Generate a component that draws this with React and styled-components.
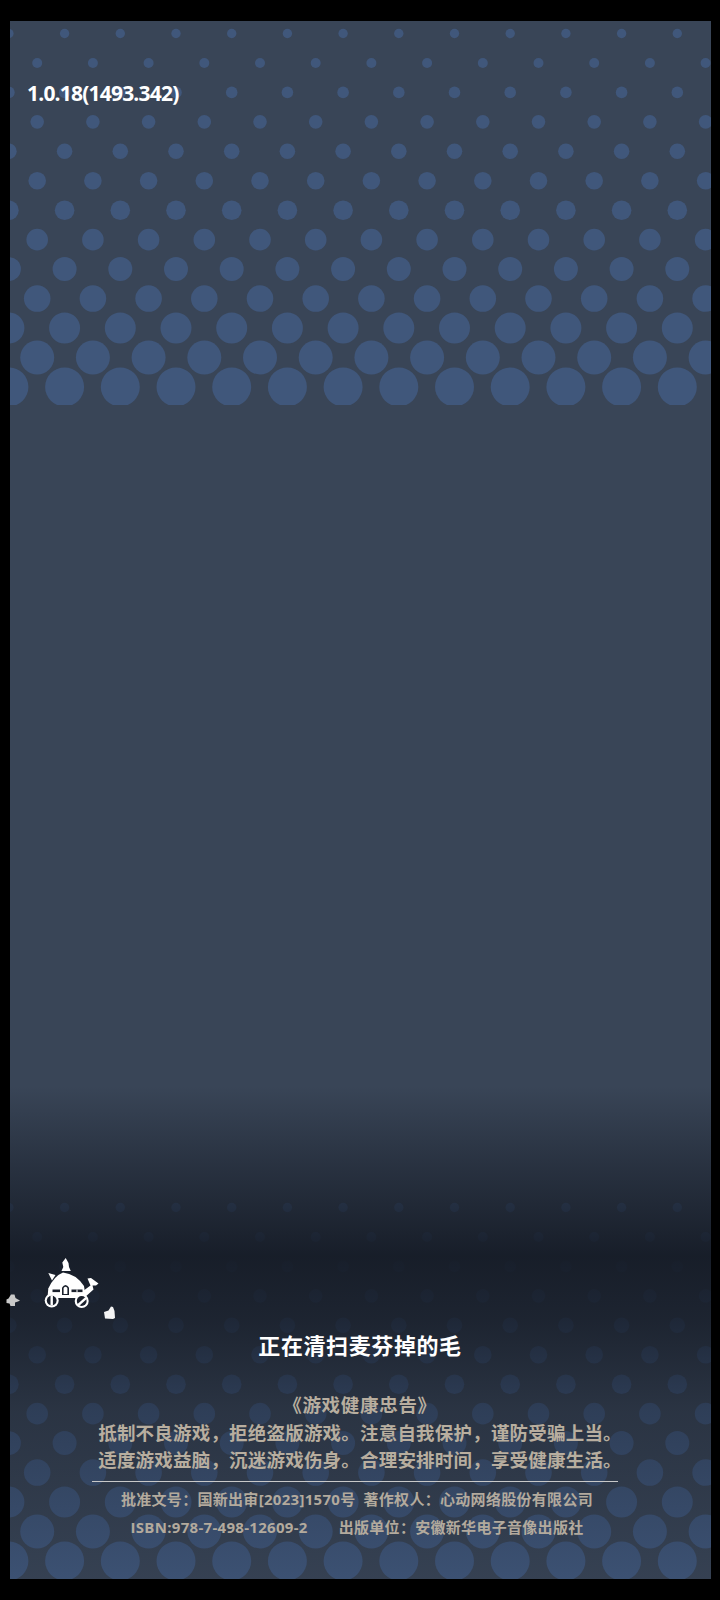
import React from "react";
import styled, { createGlobalStyle } from "styled-components";

const GlobalStyle = createGlobalStyle`
  html, body {
    margin: 0;
    padding: 0;
    background: #000;
  }
`;

const Page = styled.div`
  box-sizing: border-box;
  width: 720px;
  height: 1600px;
  padding: 20.5px 9.5px 21.5px;
  background: #000;
  font-family: "Open Sans", "Noto Sans CJK SC", sans-serif;
`;

const Panel = styled.div`
  position: relative;
  display: flex;
  flex-direction: column;
  height: 100%;
  background: #394557;
`;

const Pattern = styled.svg`
  position: absolute;
  left: 0;
  ${(props) => (props.$bottom ? "bottom: 0;" : "top: 0;")}
  width: 701px;
  height: 384px;
  display: block;
`;

const Shade = styled.div`
  position: absolute;
  inset: 0;
  background: linear-gradient(
    to bottom,
    rgba(22, 28, 39, 0) 0,
    rgba(22, 28, 39, 0) 1065px,
    rgba(22, 28, 39, 0.5) 1150px,
    rgba(22, 28, 39, 0.96) 1235px,
    rgba(22, 28, 39, 0.8) 1300px,
    rgba(22, 28, 39, 0.42) 1390px,
    rgba(22, 28, 39, 0.1) 1558px
  );
`;

const Version = styled.div`
  position: relative;
  margin: 57.5px 0 0 17.5px;
  font-size: 21px;
  line-height: 30px;
  font-weight: 700;
  letter-spacing: -0.8px;
  color: #fff;
`;

const Footer = styled.div`
  position: relative;
  margin-top: auto;
  padding-bottom: 37.5px;
  display: flex;
  flex-direction: column;
  align-items: center;
`;

const LoaderStage = styled.div`
  position: relative;
  align-self: stretch;
  height: 70px;
`;

const Wagon = styled.svg`
  position: absolute;
  left: 20.5px;
  top: 0;
  width: 90px;
  height: 70px;
`;

const Puff = styled.svg`
  position: absolute;
  left: ${(props) => props.$left}px;
  top: ${(props) => props.$top}px;
  width: 14px;
  height: 14px;
`;

const Title = styled.div`
  margin-top: 13px;
  font-size: 22px;
  line-height: 30px;
  font-weight: 700;
  letter-spacing: 0.6px;
  color: #fff;
`;

const NoticeLine = styled.div`
  margin-top: ${(props) => props.$top || 0}px;
  font-size: 18.5px;
  line-height: 27px;
  font-weight: 700;
  letter-spacing: ${(props) => props.$spacing || 0.2}px;
  white-space: nowrap;
  color: #b8ae9f;
`;

const Rule = styled.div`
  width: 526px;
  height: 1px;
  margin: 8px 10px 0 0;
  background: #c8c8c8;
`;

const CreditRow = styled.div`
  display: flex;
  margin-top: ${(props) => props.$top || 0}px;
  margin-right: 6px;
  gap: ${(props) => props.$gap}px;
  font-size: 15px;
  line-height: 28px;
  font-weight: 700;
  letter-spacing: 0.3px;
  white-space: nowrap;
  color: #b3aa9d;
`;

const dotRows = [
  4.7, 5, 5.8, 6.8, 7.8, 8.8, 9.8, 10.8, 12, 13.3, 15.5, 17, 19.5,
];

function Dots({ bottom }) {
  const dots = [];
  dotRows.forEach((r, row) => {
    const start = row % 2 === 0 ? -1.1 : 27.2;
    for (let col = 0; col < 14; col++) {
      dots.push(
        <circle
          key={row + "-" + col}
          cx={start + col * 55.7}
          cy={12.5 + row * 29.45}
          r={r}
        />
      );
    }
  });
  return (
    <Pattern $bottom={bottom} viewBox="0 0 701 384" fill="#40577b">
      {dots}
    </Pattern>
  );
}

function WagonIcon() {
  return (
    <Wagon viewBox="0 0 90 70">
      <g fill="#fff">
        <path d="M35.7 11 L38.5 16 L39 20 L40.8 24 L31.5 24 L33.3 20 L32.3 15.5 Z" />
        <path d="M18.3 26 L25.5 28 L22 33.5 Z" />
        <path d="M17.5 50 L18.3 41.5 Q24 29 33 25.5 Q46 27 54 39 L55 46 L52 51 L20 51 Z" />
        <path d="M49 47 L60.5 38.5 L57.5 31.5 L61 31 L68.5 36.5 L66 38.5 L62.5 38.5 L63.5 42.5 L54 51 Z" />
        <circle cx="21.7" cy="53.6" r="7" />
        <circle cx="51.7" cy="54" r="7" />
      </g>
      <g fill="#1a202c">
        <path d="M32 48 L32 40.5 Q35.5 35.5 39 40.5 L39 48 Z" />
        <rect x="22.5" y="42.5" width="7.5" height="2.6" />
        <rect x="41.5" y="42.5" width="11" height="2.6" />
        <circle cx="21.7" cy="53.6" r="4.9" />
        <circle cx="51.7" cy="54" r="4.9" />
      </g>
      <g fill="#fff">
        <rect x="20.5" y="48.5" width="2.4" height="10" />
        <path d="M47.5 57 L55.5 50 L57 51.8 L49 59 Z" />
        <path d="M33.6 47 L33.6 41 Q35.5 38.5 37.4 41 L37.4 47 Z" />
        <rect x="46.5" y="42.5" width="1" height="2.6" />
      </g>
    </Wagon>
  );
}

export default function App() {
  return (
    <Page>
      <GlobalStyle />
      <Panel>
        <Dots />
        <Dots bottom />
        <Shade />
        <Version>1.0.18(1493.342)</Version>
        <Footer>
          <LoaderStage>
            <WagonIcon />
            <Puff $left={-3.5} $top={46.5} viewBox="0 0 14 14" fill="#c9c9c9">
              <path d="M2.5 5.5 L5 1.5 L8.5 1.5 L9.5 5 L12 6.5 L14 7.5 L12 8.5 L9 9.5 L9 13 L4.5 13 L3.5 10.5 L0.5 10 L0.5 6.5 Z" />
            </Puff>
            <Puff $left={93} $top={59.5} viewBox="0 0 14 14" fill="#f4f4f4">
              <path d="M1 6 L5.5 4.5 L8 0.5 L10 1 L11.5 5 L12 12 L10 13 L2 12.5 Z" />
            </Puff>
          </LoaderStage>
          <Title>正在清扫麦芬掉的毛</Title>
          <NoticeLine $top={31} $spacing={0.7}>《游戏健康忠告》</NoticeLine>
          <NoticeLine $top={1}>抵制不良游戏，拒绝盗版游戏。注意自我保护，谨防受骗上当。</NoticeLine>
          <NoticeLine>适度游戏益脑，沉迷游戏伤身。合理安排时间，享受健康生活。</NoticeLine>
          <Rule />
          <CreditRow $top={3.5} $gap={8}>
            <span>批准文号：国新出审[2023]1570号</span>
            <span>著作权人：心动网络股份有限公司</span>
          </CreditRow>
          <CreditRow $gap={31}>
            <span>ISBN:978-7-498-12609-2</span>
            <span>出版单位：安徽新华电子音像出版社</span>
          </CreditRow>
        </Footer>
      </Panel>
    </Page>
  );
}
